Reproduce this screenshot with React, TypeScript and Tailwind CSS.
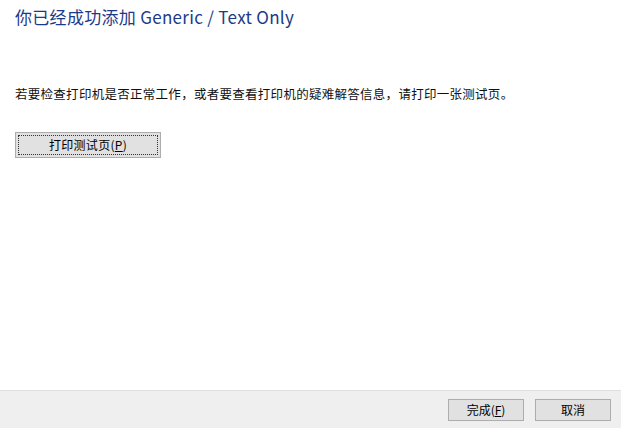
export default function App() {
  return (
    <div
      className="w-[621px] h-[428px] bg-white flex flex-col text-black"
      style={{ fontFamily: '"Noto Sans CJK SC", "Liberation Sans", sans-serif' }}
    >
      <div className="flex-1 flex flex-col px-[15px]">
        <h1 className="mt-[5px] text-[17px] leading-[24px] tracking-[0.3px] text-[#1c3a8a]">
          你已经成功添加 Generic / Text Only
        </h1>
        <p className="mt-[56px] text-[12.5px] leading-[18px] tracking-[0.28px] text-[#111]">
          若要检查打印机是否正常工作，或者要查看打印机的疑难解答信息，请打印一张测试页。
        </p>
        <div className="mt-[28px]">
          <button className="w-[146px] h-[26px] border border-[#adadad] bg-[#e1e1e1] p-[2px]">
            <span className="flex h-full items-center justify-center border border-dotted border-[#333] text-[12px] tracking-[0.3px]">
              打印测试页(<span className="underline">P</span>)
            </span>
          </button>
        </div>
      </div>
      <div className="h-[38px] border-t border-[#dfdfdf] bg-[#efefef] flex items-center justify-end gap-[11px] pr-[10px]">
        <button className="w-[76px] h-[22px] border border-[#adadad] bg-[#e1e1e1] text-[12px] flex items-center justify-center">
          完成(<span className="underline">F</span>)
        </button>
        <button className="w-[76px] h-[22px] border border-[#adadad] bg-[#e1e1e1] text-[12px] flex items-center justify-center">
          取消
        </button>
      </div>
    </div>
  );
}
